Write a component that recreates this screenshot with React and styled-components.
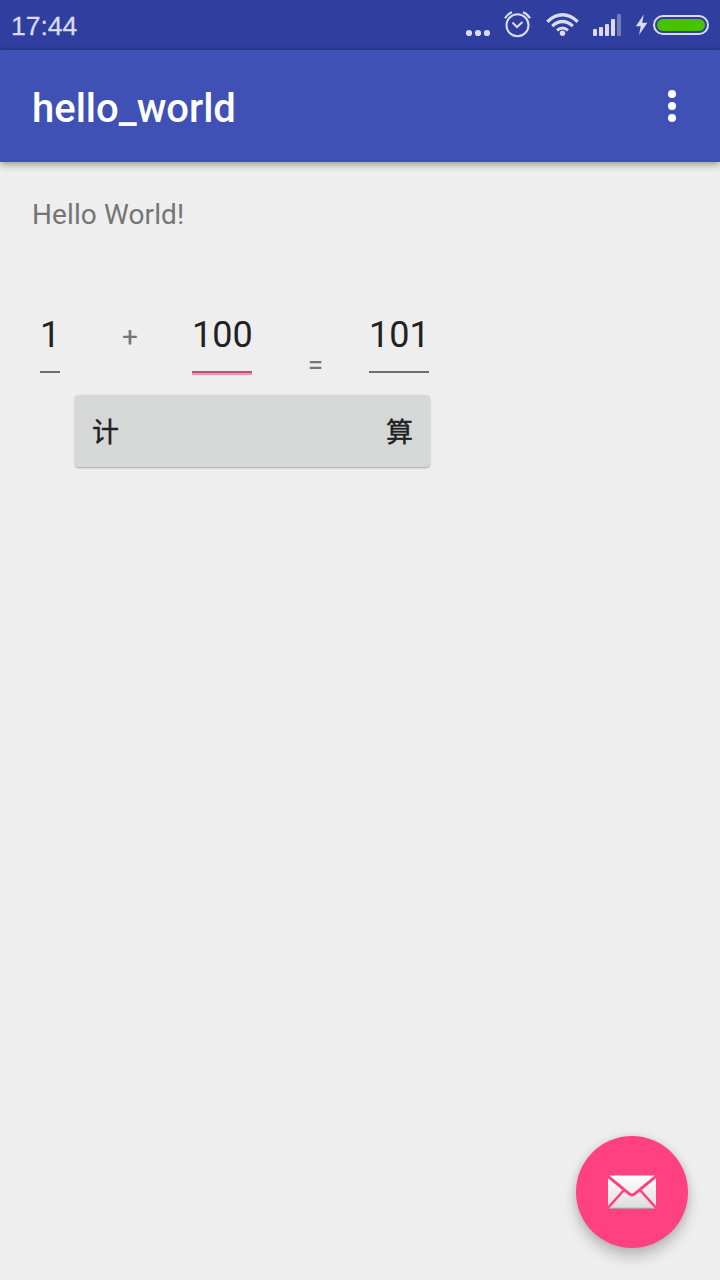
import React from 'react';
import styled, { createGlobalStyle } from 'styled-components';

const GlobalStyle = createGlobalStyle`
  * { box-sizing: border-box; }
  body { margin: 0; background: #eeeeee; }
`;

const Screen = styled.div`
  width: 720px;
  height: 1280px;
  display: flex;
  flex-direction: column;
  overflow: hidden;
  background: #eeeeee;
  font-family: Roboto, "Noto Sans CJK SC", sans-serif;
`;

const StatusBar = styled.header`
  height: 50px;
  flex: none;
  display: flex;
  align-items: center;
  padding: 0 11px;
  background: linear-gradient(#303f9f 0, #303f9f 46px, #2b388e 50px);
  color: #dadcee;
`;

const Clock = styled.time`
  font-family: "Liberation Sans", Arial, sans-serif;
  font-size: 26.5px;
  line-height: 30px;
  padding-top: 2px;
  -webkit-text-stroke: 0.3px #dadcee;
`;

const StatusIcons = styled.svg`
  display: block;
  width: 246px;
  height: 50px;
  margin-left: auto;
`;

const AppBar = styled.div`
  height: 112px;
  flex: none;
  display: flex;
  align-items: center;
  justify-content: space-between;
  padding: 0 44px 0 32px;
  background: #3f51b5;
  box-shadow: 0 3px 7px rgba(0, 0, 0, 0.34);
`;

const Title = styled.h1`
  margin: 0;
  padding-top: 6px;
  font-size: 40px;
  line-height: 48px;
  font-weight: 500;
  color: #fff;
`;

const OverflowButton = styled.button`
  display: flex;
  flex-direction: column;
  gap: 4px;
  padding: 0;
  border: 0;
  background: none;
`;

const Dot = styled.span`
  width: 8px;
  height: 8px;
  border-radius: 50%;
  background: #fff;
`;

const Content = styled.main`
  flex: 1;
  padding: 37px 32px 0;
`;

const Greeting = styled.p`
  margin: 0;
  font-size: 28px;
  line-height: 32px;
  letter-spacing: 0.1px;
  color: #757575;
`;

const Equation = styled.div`
  display: flex;
  align-items: flex-start;
  height: 61px;
  margin: 83px 0 0 8px;
`;

const Field = styled.div`
  width: ${(p) => p.$width}px;
  height: 61px;
  padding-bottom: 2px;
  font-size: 36px;
  line-height: 42px;
  color: #212121;
  background: ${(p) =>
    p.$focused
      ? 'linear-gradient(transparent 57px, #bc5377 57px, #bc5377 59px, #f590b2 59px)'
      : 'linear-gradient(transparent 57px, #6e6e6e 57px, #6e6e6e 59px, transparent 59px)'};
`;

const Operator = styled.span`
  width: ${(p) => p.$width}px;
  padding-top: ${(p) => p.$drop}px;
  padding-left: ${(p) => p.$shift}px;
  text-align: center;
  font-size: 28px;
  line-height: 32px;
  color: #757575;
`;

const CalculateButton = styled.button`
  display: flex;
  justify-content: space-between;
  align-items: center;
  width: 355px;
  height: 72px;
  margin: 20px 0 0 43.4px;
  padding: 0 17.4px 0 16.6px;
  border: 0;
  border-radius: 4px;
  background: #d6d8d7;
  box-shadow: 0 1px 2px rgba(0, 0, 0, 0.3);
  color: #212121;
  font: 400 27px/40px "Noto Sans CJK SC", sans-serif;
  -webkit-text-stroke: 0.4px #212121;
`;

const Fab = styled.button`
  position: absolute;
  left: 576px;
  top: 1136px;
  width: 112px;
  height: 112px;
  display: flex;
  align-items: center;
  justify-content: center;
  padding: 0;
  border: 0;
  border-radius: 50%;
  background: #ff4081;
  box-shadow: 0 9px 14px rgba(0, 0, 0, 0.2), 0 0 10px rgba(0, 0, 0, 0.1);
`;

function SystemIcons() {
  return (
    <StatusIcons viewBox="463 0 246 50" fill="none">
      <g fill="#dadcee">
        <circle cx="469" cy="33" r="3.1" />
        <circle cx="478" cy="33" r="3.1" />
        <circle cx="487" cy="33" r="3.1" />
        <circle cx="562.5" cy="33.3" r="2.7" />
        <rect x="593" y="29" width="4" height="7" rx="1" />
        <rect x="599" y="27" width="4" height="9" rx="1" />
        <rect x="605" y="24" width="4" height="12" rx="1" />
        <rect x="611" y="19" width="4" height="17" rx="1" />
        <rect x="617" y="14" width="4" height="22" rx="1" opacity="0.4" />
        <path d="M643.8 14.5 635.8 26.2 640.7 26.2 639 35 647.4 22.8 642.2 22.8Z" />
      </g>
      <g stroke="#dadcee">
        <circle cx="517.5" cy="25.3" r="11" strokeWidth="2" />
        <path d="M512.5 22.5 517 27 522.5 22" strokeWidth="2" />
        <path d="M505 18.2Q507.5 14 512 12.3M530 18.2Q527.5 14 523 12.3" strokeWidth="2.2" />
        <path d="M547.3 21.7Q562.5 7.9 577.7 21.7" strokeWidth="3.3" />
        <path d="M552.2 26.1Q562.5 16.9 572.8 26.1" strokeWidth="3.2" />
        <path d="M557 30.3Q562.5 25.6 568 30.3" strokeWidth="3" />
        <rect x="654" y="16" width="54" height="18" rx="9" strokeWidth="2" />
      </g>
      <rect x="657" y="19" width="48" height="12" rx="6" fill="#46c200" />
    </StatusIcons>
  );
}

function MailIcon() {
  return (
    <svg width="48" height="34" viewBox="0 0 48 34" fill="none">
      <defs>
        <linearGradient id="paper" x1="0" y1="0" x2="0" y2="34" gradientUnits="userSpaceOnUse">
          <stop offset="0" stopColor="#fff" />
          <stop offset="1" stopColor="#dcdcdc" />
        </linearGradient>
      </defs>
      <rect y=".5" width="48" height="33" rx="1" fill="url(#paper)" />
      <path d="M3 33.2H45" stroke="#999" strokeWidth=".8" />
      <g stroke="#ff4081" strokeWidth="2.9">
        <path d="M-1 .5 21 18.7Q24 21.3 27 18.7L49 .5" />
        <path d="M15.5 15.5 -.5 33.4M32.5 15.5 48.5 33.4" strokeWidth="2.6" />
      </g>
    </svg>
  );
}

export default function App() {
  return (
    <>
      <GlobalStyle />
      <Screen>
        <StatusBar>
          <Clock>17:44</Clock>
          <SystemIcons />
        </StatusBar>
        <AppBar>
          <Title>hello_world</Title>
          <OverflowButton aria-label="More options">
            <Dot />
            <Dot />
            <Dot />
          </OverflowButton>
        </AppBar>
        <Content>
          <Greeting>Hello World!</Greeting>
          <Equation>
            <Field $width={20}>1</Field>
            <Operator $width={132} $drop={7} $shift={8}>+</Operator>
            <Field $width={60} $focused>100</Field>
            <Operator $width={117} $drop={35} $shift={10}>=</Operator>
            <Field $width={60}>101</Field>
          </Equation>
          <CalculateButton>
            <span>计</span>
            <span>算</span>
          </CalculateButton>
        </Content>
        <Fab aria-label="Email">
          <MailIcon />
        </Fab>
      </Screen>
    </>
  );
}
